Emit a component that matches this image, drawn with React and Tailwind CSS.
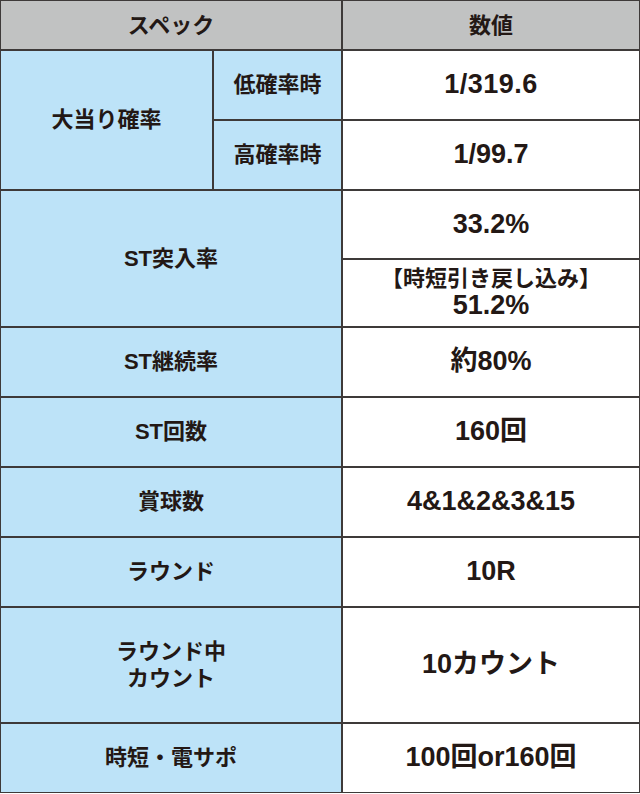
export default function App() {
  const font = { fontFamily: '"Liberation Sans","Noto Sans CJK JP",sans-serif' };
  const lbl = "bg-[#bde3f8] flex items-center justify-center text-center font-bold text-[22px] leading-[1.25] text-[#231815]";
  const val = "bg-white flex items-center justify-center text-center font-bold text-[27px] leading-[1.1] text-[#231815]";
  return (
    <div className="w-[640px] h-[794px] bg-white" style={font}>
      <div className="grid grid-cols-[211px_127px_1fr] grid-rows-[48px_68px_68px_67px_66px_68px_68px_68px_68px_114px_68px] gap-[2px] p-[1px] bg-[#3e3a39] w-[640px]">
        <div className="col-span-2 bg-[#c1c2c2] flex items-center justify-center font-bold text-[22px] text-[#231815]">スペック</div>
        <div className="bg-[#c1c2c2] flex items-center justify-center font-bold text-[22px] text-[#231815]">数値</div>

        <div className={`${lbl} row-span-2`}>大当り確率</div>
        <div className={lbl}>低確率時</div>
        <div className={`${val} tracking-[0.5px]`}>1/319.6</div>
        <div className={lbl}>高確率時</div>
        <div className={val}>1/99.7</div>

        <div className={`${lbl} col-span-2 row-span-2`}>ST突入率</div>
        <div className={val}>33.2%</div>
        <div className={`${val} flex-col`}>
          <span className="text-[22px] leading-[1.1]">【時短引き戻し込み】</span>
          <span className="leading-[1.05]">51.2%</span>
        </div>

        <div className={`${lbl} col-span-2`}>ST継続率</div>
        <div className={val}>約80%</div>

        <div className={`${lbl} col-span-2`}>ST回数</div>
        <div className={val}>160回</div>

        <div className={`${lbl} col-span-2`}>賞球数</div>
        <div className={val}>4&amp;1&amp;2&amp;3&amp;15</div>

        <div className={`${lbl} col-span-2`}>ラウンド</div>
        <div className={val}>10R</div>

        <div className={`${lbl} col-span-2 flex-col`}>
          <span>ラウンド中</span>
          <span>カウント</span>
        </div>
        <div className={val}>10カウント</div>

        <div className={`${lbl} col-span-2`}>時短・電サポ</div>
        <div className={val}>100回or160回</div>
      </div>
    </div>
  );
}
